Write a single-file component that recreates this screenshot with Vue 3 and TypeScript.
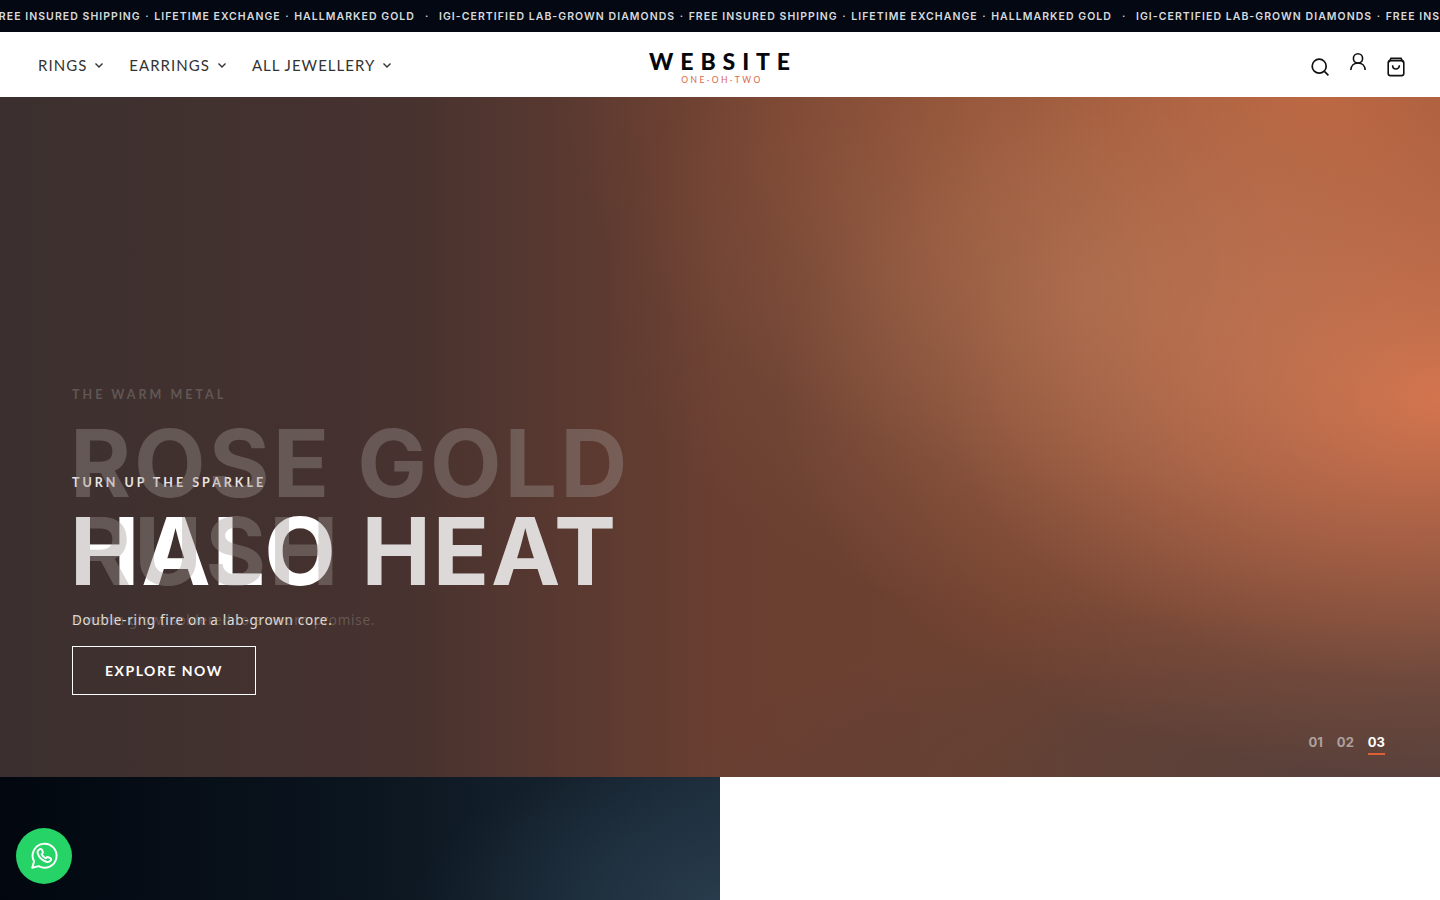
<script setup lang="ts">
const marquee = [
  "IGI-CERTIFIED LAB-GROWN DIAMONDS",
  "FREE INSURED SHIPPING",
  "LIFETIME EXCHANGE",
  "HALLMARKED GOLD",
];
const groups = [0, 1, 2];
const navItems = ["RINGS", "EARRINGS", "ALL JEWELLERY"];
const pages = ["01", "02", "03"];
</script>

<template>
  <div class="page">
    <div class="topbar">
      <div class="track">
        <div v-for="g in groups" :key="g" class="group">
          <template v-for="(m, i) in marquee" :key="m">
            <span>{{ m }}</span>
            <span v-if="i < marquee.length - 1" class="dot">·</span>
          </template>
          <span class="dot end">·</span>
        </div>
      </div>
    </div>

    <header class="header">
      <nav class="nav">
        <a v-for="n in navItems" :key="n" class="nav-link">
          {{ n }}
          <svg width="10" height="10" viewBox="0 0 10 10" fill="none" stroke="currentColor" stroke-width="1.4">
            <path d="M1.500 3.500 5 7l3.500-3.500" />
          </svg>
        </a>
      </nav>
      <div class="logo">
        <div class="logo-main">WEBSITE</div>
        <div class="logo-sub">ONE·OH·TWO</div>
      </div>
      <div class="icons">
        <svg width="20" height="20" viewBox="0 0 20 20" fill="none" stroke="#111" stroke-width="1.7">
          <circle cx="9.2" cy="9.2" r="7" />
          <path d="m14.4 14.4 4 4" />
        </svg>
        <svg class="user" width="20" height="20" viewBox="0 0 20 20" fill="none" stroke="#111" stroke-width="1.6">
          <circle cx="10" cy="6.4" r="4.6" />
          <path d="M2.800 18c.3-4.200 3.200-7 7.200-7s6.900 2.800 7.200 7" />
        </svg>
        <svg width="20" height="20" viewBox="0 0 20 20" fill="none" stroke="#111" stroke-width="1.6">
          <rect x="2.200" y="3.600" width="15.600" height="15" rx="2.400" />
          <path d="M3 5 5 1.400h10L17 5" />
          <path d="M6.600 8.200c0 5 6.800 5 6.800 0" />
        </svg>
      </div>
    </header>

    <section class="hero">
      <div class="slide active">
        <p class="eyebrow">TURN UP THE SPARKLE</p>
        <h2 class="title"><span class="word-a">HALO</span> <span class="word-b">HEAT</span></h2>
        <p class="desc">Double-ring fire on a lab-grown core.</p>
        <a class="cta">EXPLORE NOW</a>
      </div>
      <div class="slide ghost">
        <p class="eyebrow">THE WARM METAL</p>
        <h2 class="title">ROSE GOLD<br />RUSH</h2>
        <p class="desc">A warm glow, soldered to a sworn promise.</p>
        <a class="cta">EXPLORE NOW</a>
      </div>
      <div class="pager">
        <span v-for="(p, i) in pages" :key="p" class="page-num" :class="{ on: i === 2 }">{{ p }}</span>
      </div>
    </section>

    <section class="below">
      <div class="tile"></div>
      <div class="blank"></div>
    </section>

    <a class="whatsapp">
      <svg width="30" height="30" viewBox="0 0 28 28" fill="none" stroke="#fff" stroke-width="1.800" stroke-linejoin="round">
        <path d="M3 25l1.700-5.900A11.200 11.200 0 1 1 9 23.500L3 25Z" />
        <path d="M9.600 7.900c.9-.8 2-.7 2.400.2l.9 2c.2.500.1 1-.3 1.400l-.8.800c.8 1.800 2.100 3.100 3.900 3.900l.8-.8c.4-.4.9-.5 1.400-.3l2 .9c.9.400 1 1.500.2 2.400-1 1.100-2.500 1.500-4 1-4-1.300-6.800-4.100-8-7.900-.5-1.500 0-2.700 1.500-3.600Z" />
      </svg>
    </a>
  </div>
</template>

<style>
html,
body {
  margin: 0;
  overflow: hidden;
}
</style>

<style scoped>
.page {
  width: 1440px;
  height: 900px;
  display: flex;
  flex-direction: column;
  font-family: Lato, "Open Sans", sans-serif;
  overflow: hidden;
}

.topbar {
  height: 32px;
  flex: none;
  background: #030812;
  overflow: hidden;
  display: flex;
  align-items: center;
}

.track {
  display: flex;
  margin-left: -258px;
  white-space: nowrap;
}

.group {
  display: flex;
  width: 697px;
  flex: none;
  font-family: Inter, sans-serif;
  font-size: 10.5px;
  font-weight: 600;
  letter-spacing: 1.05px;
  color: #d8dadd;
}

.dot {
  margin: 0 4.5px;
}

.dot.end {
  margin: 0 0 0 10px;
}

.header {
  height: 65px;
  flex: none;
  box-sizing: border-box;
  background: #fff;
  display: grid;
  grid-template-columns: 1fr auto 1fr;
  align-items: center;
  padding: 0 34px 0 38px;
}

.nav {
  display: flex;
  gap: 25px;
}

.nav-link {
  display: flex;
  align-items: center;
  gap: 7px;
  font-size: 15px;
  letter-spacing: 1.03px;
  color: #333;
}

.logo {
  text-align: center;
  color: #05070d;
  padding-top: 4px;
}

.logo-main {
  font-size: 23px;
  font-weight: 900;
  letter-spacing: 6.9px;
  line-height: 24px;
  margin-right: -2px;
}

.logo-sub {
  font-size: 8.5px;
  letter-spacing: 2.5px;
  line-height: 10px;
  margin-top: 2px;
  color: #d9674a;
}

.icons {
  display: flex;
  justify-content: flex-end;
  align-items: center;
  gap: 18px;
  padding-top: 4px;
}

.icons .user {
  margin-bottom: 10px;
}

.hero {
  height: 680px;
  flex: none;
  position: relative;
  display: grid;
  background:
    radial-gradient(ellipse 480px 340px at 1090px 190px, rgba(190, 140, 105, 0.36), rgba(190, 140, 105, 0.24) 35%, rgba(190, 140, 105, 0.08) 70%, rgba(190, 140, 105, 0)),
    radial-gradient(ellipse 660px 380px at 1440px 300px, rgba(218, 118, 78, 0.95), rgba(218, 118, 78, 0.55) 40%, rgba(218, 118, 78, 0.14) 75%, rgba(218, 118, 78, 0)),
    radial-gradient(ellipse 760px 420px at 1320px 0, rgba(194, 103, 63, 0.9), rgba(194, 103, 63, 0.4) 50%, rgba(194, 103, 63, 0.1) 80%, rgba(194, 103, 63, 0)),
    radial-gradient(ellipse 620px 170px at 1300px 680px, rgba(84, 64, 60, 0.7), rgba(84, 64, 60, 0)),
    linear-gradient(90deg, #3b302f 0%, #47322f 28%, #6a3f31 50%, #6e4130 70%, #5f4239 100%);
}

.slide {
  grid-area: 1 / 1;
  align-self: end;
  padding: 0 0 82px 72px;
}

.eyebrow {
  margin: 0;
  font-size: 12.5px;
  font-weight: 700;
  letter-spacing: 3px;
  line-height: 16px;
}

.title {
  margin: 16px 0 0 -2px;
  font-family: Inter, sans-serif;
  font-size: 93px;
  font-weight: 700;
  line-height: 88px;
  letter-spacing: 1.8px;
}

.ghost .title {
  letter-spacing: 3px;
}

.desc {
  margin: 15px 0 0;
  font-family: "Noto Sans", sans-serif;
  font-size: 13.5px;
  letter-spacing: 0.72px;
  line-height: 20px;
}

.cta {
  display: flex;
  align-items: center;
  justify-content: center;
  box-sizing: border-box;
  width: 184px;
  height: 49px;
  margin-top: 16px;
  padding-bottom: 1px;
  border: 1px solid #fff;
  font-size: 14px;
  font-weight: 700;
  letter-spacing: 1.5px;
  color: #fff;
}

.active .eyebrow {
  color: #e8e4e2;
}

.active .desc {
  color: #e4e0de;
}

.word-a {
  color: #fff;
}

.word-b {
  color: #dcd9d8;
}

.ghost {
  color: rgba(156, 150, 148, 0.39);
}

.ghost .cta {
  visibility: hidden;
}

.pager {
  position: absolute;
  right: 55px;
  bottom: 22px;
  display: flex;
  gap: 14px;
  font-family: Inter, sans-serif;
  font-size: 13px;
  line-height: 18px;
  font-weight: 700;
}

.page-num {
  color: rgba(255, 255, 255, 0.5);
  padding-bottom: 2px;
  border-bottom: 2px solid transparent;
}

.page-num.on {
  color: #fff;
  border-bottom-color: #dc5f35;
}

.below {
  flex: 1;
  display: grid;
  grid-template-columns: 1fr 1fr;
}

.tile {
  background:
    radial-gradient(ellipse 300px 150px at 720px 123px, rgba(44, 66, 84, 0.7), transparent),
    linear-gradient(90deg, #02070f 0%, #0b151f 50%, #1c2b39 100%);
}

.blank {
  background: #fff;
}

.whatsapp {
  position: fixed;
  left: 16px;
  bottom: 16px;
  width: 56px;
  height: 56px;
  border-radius: 50%;
  background: #25d366;
  display: flex;
  align-items: center;
  justify-content: center;
}
</style>
